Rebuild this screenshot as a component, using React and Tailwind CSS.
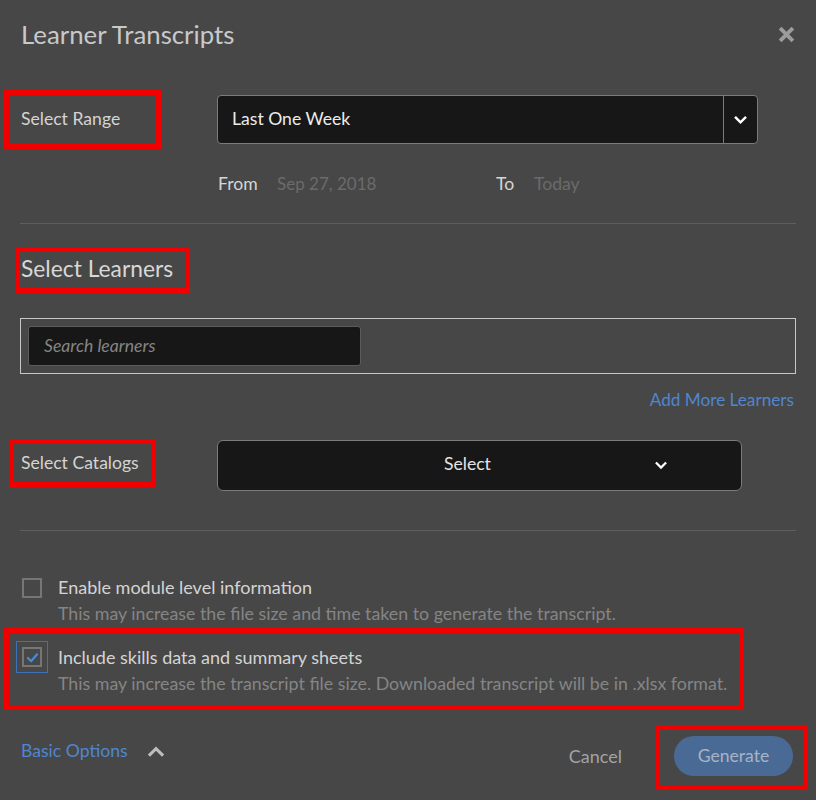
import React from "react";

const Chevron = ({ up = false, className = "" }) => (
  <svg viewBox="0 0 14 10" className={className} fill="none" stroke="currentColor" strokeWidth="2.6" strokeLinecap="square">
    {up ? <path d="M2 8 L7 3 L12 8" /> : <path d="M2 2.5 L7 7.5 L12 2.5" />}
  </svg>
);

export default function App() {
  return (
    <div className="w-[816px] h-[800px] bg-[#474747] flex flex-col overflow-hidden" style={{ fontFamily: "Lato, 'Open Sans', sans-serif" }}>
      {/* Header */}
      <div className="h-[68px] flex items-center justify-between pl-[21px] pr-[21px]">
        <div className="text-[25.8px] text-[#c9c9c9]">Learner Transcripts</div>
        <svg viewBox="0 0 16 16" className="w-[17px] h-[17px] text-[#9c9c9c]" stroke="currentColor" strokeWidth="3.6" strokeLinecap="butt">
          <path d="M2 2 L14 14 M14 2 L2 14" />
        </svg>
      </div>

      {/* Range row */}
      <div className="mt-[22px] h-[59px] flex items-center">
        <div className="w-[217px] h-[59px]">
          <div className="ml-[4px] w-[157px] h-[59px] border-[5px] border-[#f20000] flex items-center pl-[12px] text-[17.6px] text-[#d4d4d4]">
            Select Range
          </div>
        </div>
        <div className="w-[541px] h-[49px] bg-[#171717] border border-[#7b7b7b] rounded-[4px] flex">
          <div className="flex-1 flex items-center pl-[14px] text-[17.6px] text-[#ececec]">Last One Week</div>
          <div className="w-[34px] border-l border-[#7b7b7b] flex items-center justify-center text-white">
            <Chevron className="w-[13px] h-[10px]" />
          </div>
        </div>
      </div>

      {/* From / To */}
      <div className="mt-[23px] h-[24px] flex items-center text-[17px]">
        <div className="ml-[218px] w-[59px] text-[#d6d6d6] text-[17.6px]">From</div>
        <div className="w-[219px] text-[#6b6b6b]">Sep 27, 2018</div>
        <div className="w-[38px] text-[#d6d6d6] text-[17.6px]">To</div>
        <div className="text-[#6b6b6b] text-[17.6px]">Today</div>
      </div>

      <div className="mt-[27px] mx-[20px] h-px bg-[#5e5e5e]" />

      {/* Select Learners */}
      <div className="mt-[23px] ml-[15px] w-[175px] h-[46px] border-[5px] border-[#f20000] flex items-center pl-[1px] pb-[3px] text-[22.8px] text-[#d8d8d8]">
        Select Learners
      </div>

      <div className="mt-[25px] mx-[20px] h-[56px] border border-[#c8c8c8] flex items-center pl-[7px]">
        <div className="w-[333px] h-[40px] bg-[#171717] border border-[#5c5c5c] rounded-[3px] flex items-center pl-[15px] text-[17.6px] italic text-[#858585]">
          Search learners
        </div>
      </div>

      <div className="mt-[14px] h-[24px] flex items-center justify-end pr-[22px] text-[17.2px] text-[#4f86cf]">
        Add More Learners
      </div>

      {/* Catalogs */}
      <div className="mt-[27px] h-[52px] flex items-start">
        <div className="w-[217px]">
          <div className="ml-[9px] w-[147px] h-[48px] border-[5px] border-[#f20000] flex items-center pl-[7px] text-[17.6px] text-[#d4d4d4]">
            Select Catalogs
          </div>
        </div>
        <div className="mt-[1px] w-[525px] h-[51px] bg-[#171717] border border-[#7b7b7b] rounded-[6px] flex items-center pl-[226px] text-[17.6px] text-[#e4e4e4]">
          <span className="w-[211px] pb-[2px]">Select</span>
          <Chevron className="w-[12px] h-[9px] text-white" />
        </div>
      </div>

      <div className="mt-[39px] mx-[20px] h-px bg-[#5e5e5e]" />

      {/* Option 1 */}
      <div className="mt-[43px] flex items-start">
        <div className="ml-[22px] mt-[4px] w-[20px] h-[20px] border-2 border-[#767676]" />
        <div className="ml-[16px] leading-[26px]">
          <div className="text-[#d4d4d4] text-[18px]">Enable module level information</div>
          <div className="text-[#858585] text-[17.8px]">This may increase the file size and time taken to generate the transcript.</div>
        </div>
      </div>

      {/* Option 2 */}
      <div className="mt-[2px] ml-[4px] w-[740px] h-[82px] border-[5px] border-[#f20000] flex items-start pt-[8px] pl-[7px]">
        <div className="w-[32px] h-[32px] border border-[#3d72b8] flex items-center justify-center">
          <div className="w-[20px] h-[20px] border-2 border-[#767676] flex items-center justify-center">
            <svg viewBox="0 0 14 12" className="w-[13px] h-[11px]" fill="none" stroke="#4a8ad8" strokeWidth="2.4" strokeLinecap="round" strokeLinejoin="round">
              <path d="M2 6.5 L5.5 10 L12 2.5" />
            </svg>
          </div>
        </div>
        <div className="ml-[10px] mt-[3px] leading-[26px]">
          <div className="text-[#d4d4d4] text-[18px]">Include skills data and summary sheets</div>
          <div className="text-[#858585] text-[17.8px]">This may increase the transcript file size. Downloaded transcript will be in .xlsx format.</div>
        </div>
      </div>

      {/* Footer */}
      <div className="mt-[15px] h-[65px] flex items-start">
        <div className="ml-[21px] mt-[14px] h-[24px] flex items-center text-[17.6px] text-[#4f86cf]">
          Basic Options
          <Chevron up className="ml-[19px] w-[18px] h-[12px] text-[#bdbdbd]" />
        </div>
        <div className="ml-auto mt-[19px] h-[24px] flex items-center text-[18px] text-[#a3a3a3]">Cancel</div>
        <div className="ml-[33px] mr-[8px] w-[153px] h-[65px] border-[5px] border-[#f20000] pt-[6px] pl-[14px]">
          <div className="w-[119px] h-[40px] rounded-full bg-[#4a6a96] flex items-center justify-center text-[17.6px] text-[#a8b3c3]">
            Generate
          </div>
        </div>
      </div>
    </div>
  );
}
